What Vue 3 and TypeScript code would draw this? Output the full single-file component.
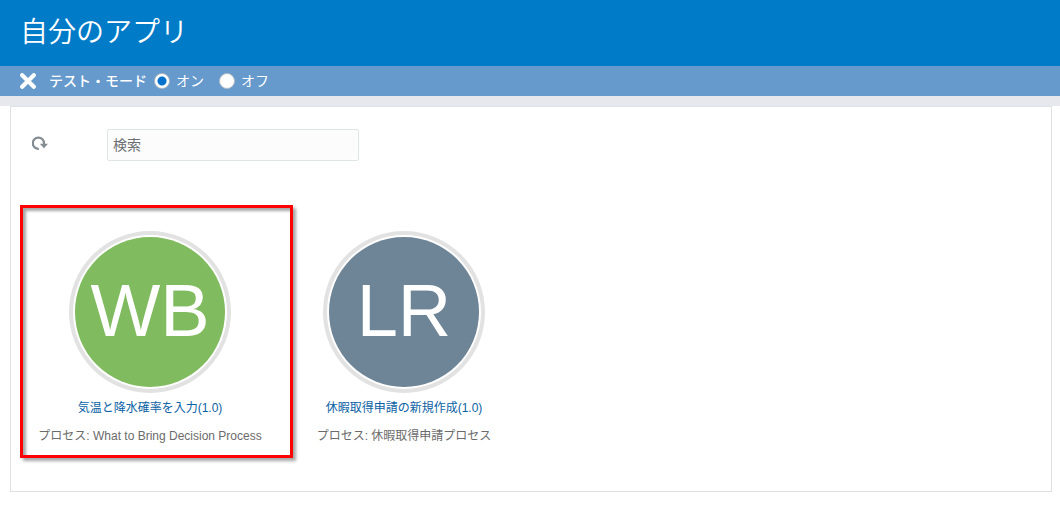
<script setup lang="ts">
import { ref } from 'vue'

interface AppItem {
  initials: string
  name: string
  process: string
  tone: string
  highlighted: boolean
}

const testMode = ref<'on' | 'off'>('on')
const query = ref('')

const apps: AppItem[] = [
  { initials: 'WB', name: '気温と降水確率を入力(1.0)', process: 'プロセス: What to Bring Decision Process', tone: 'green', highlighted: true },
  { initials: 'LR', name: '休暇取得申請の新規作成(1.0)', process: 'プロセス: 休暇取得申請プロセス', tone: 'slate', highlighted: false },
]
</script>

<template>
  <div class="page">
    <header class="banner">
      <h1>自分のアプリ</h1>
    </header>
    <div class="mode-bar">
      <button class="close" type="button" aria-label="閉じる">
        <svg viewBox="0 0 16 16" width="16" height="16" aria-hidden="true">
          <path d="M2.2 2.2L13.8 13.8M13.8 2.2L2.2 13.8" stroke="#fff" stroke-width="4.2" stroke-linecap="round" />
        </svg>
      </button>
      <span id="mode-label" class="mode-label">テスト・モード</span>
      <div class="options" role="radiogroup" aria-labelledby="mode-label">
        <label><input v-model="testMode" type="radio" name="mode" value="on">オン</label>
        <label><input v-model="testMode" type="radio" name="mode" value="off">オフ</label>
      </div>
    </div>
    <div class="strip"></div>
    <main class="panel">
      <div class="toolbar">
        <button class="refresh" type="button" aria-label="リフレッシュ">
          <svg viewBox="0 0 16 14" width="16" height="14" aria-hidden="true">
            <path d="M6.8 12.8A5.6 5.6 0 1 1 12 7.4V8" fill="none" stroke="#858c91" stroke-width="2.2" />
            <path d="M7.8 7.8H16L12 12.2z" fill="#858c91" />
          </svg>
        </button>
        <input v-model="query" class="search" type="text" placeholder="検索" aria-label="検索">
      </div>
      <ul class="apps">
        <li v-for="app in apps" :key="app.initials" class="app" :class="{ highlighted: app.highlighted }">
          <span class="ring"><span class="disc" :class="app.tone">{{ app.initials }}</span></span>
          <a href="#" class="name">{{ app.name }}</a>
          <p class="process">{{ app.process }}</p>
        </li>
      </ul>
    </main>
  </div>
</template>

<style>
body {
  background: #fff;
}
</style>

<style scoped>
.page {
  font-family: "Liberation Sans", "Noto Sans CJK JP", sans-serif;
  font-size: 14px;
  color: #6b6b6b;
}
.page * {
  box-sizing: border-box;
}
.banner {
  background: #007bc8;
  padding: 13px 20px;
}
h1 {
  margin: 0;
  font-size: 28px;
  font-weight: 350;
  line-height: 40px;
  color: #fff;
}
.mode-bar {
  display: flex;
  align-items: center;
  height: 30px;
  padding-left: 20px;
  background: #6699cc;
  color: #fff;
  line-height: 20px;
}
button {
  display: flex;
  padding: 0;
  border: 0;
  background: none;
  cursor: pointer;
}
.mode-label {
  margin: 0 7px 0 13px;
  font-weight: 500;
}
.options {
  display: flex;
  gap: 15px;
}
.options label {
  display: flex;
  align-items: center;
  gap: 6px;
}
.options input {
  appearance: none;
  width: 16px;
  height: 16px;
  margin: 0;
  border: 1px solid #b5bcc4;
  border-radius: 50%;
  background: #fff;
}
.options input:checked {
  background: radial-gradient(circle, #0572ce 4px, #fff 5px);
}
.strip {
  height: 10px;
  background: #e7e8ed;
}
.panel {
  margin: 0 8px 0 10px;
  padding: 22px 12px 32px;
  border: 1px solid #dfe0e3;
}
.toolbar {
  display: flex;
  align-items: center;
  gap: 59px;
  padding-left: 9px;
}
.refresh {
  margin-bottom: 4px;
}
.search {
  width: 252px;
  height: 32px;
  padding: 0 5px;
  border: 1px solid #dfe4e7;
  border-radius: 2px;
  background: #fcfcfc;
  font: inherit;
  color: #333;
}
.search::placeholder {
  color: #6b6f73;
  opacity: 1;
}
.apps {
  display: flex;
  flex-wrap: wrap;
  margin: 70px 0 0;
  padding: 0;
  list-style: none;
}
.app {
  position: relative;
  display: flex;
  flex-direction: column;
  align-items: center;
  width: 254px;
  height: 228px;
  font-size: 12px;
  line-height: 16px;
  white-space: nowrap;
}
.highlighted::after {
  content: "";
  position: absolute;
  inset: -26px -16px 1px -3px;
  border: 3px solid #f00;
  box-shadow: 3px 3px 3px rgba(0, 0, 0, 0.35), inset 3px 3px 3px rgba(0, 0, 0, 0.35);
  pointer-events: none;
}
.ring {
  padding: 2px;
  border: 4px solid #e2e2e2;
  border-radius: 50%;
}
.disc {
  display: flex;
  align-items: center;
  justify-content: center;
  width: 150px;
  height: 150px;
  padding-bottom: 2px;
  border-radius: 50%;
  color: #fff;
  font-size: 74px;
  line-height: 82px;
}
.green {
  background: #81bb5f;
}
.slate {
  background: #6e8598;
}
.name {
  margin-top: 7px;
  color: #0b62a4;
  text-decoration: none;
}
.process {
  margin: 12px 0 0;
}
</style>
